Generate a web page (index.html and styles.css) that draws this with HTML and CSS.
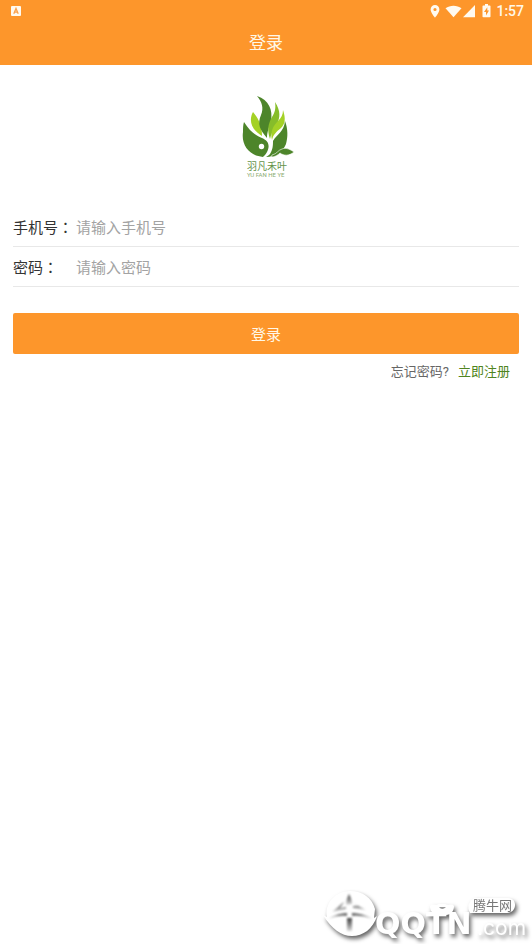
FILE: index.html
```html
<!DOCTYPE html>
<html lang="zh-CN">
<head>
<meta charset="utf-8">
<meta name="viewport" content="width=device-width, initial-scale=1">
<title>登录</title>
<link rel="stylesheet" href="styles.css">
</head>
<body>
<header class="header">
  <div class="status">
    <svg class="app-icon" width="12" height="12" viewBox="0 0 12 12" aria-hidden="true">
      <rect x="1" y="1" width="10" height="10" rx="1" fill="#fffaf0"/>
      <path d="M3.8 8.800 6 3.500 8.200 8.800M4.800 7.200h2.400" fill="none" stroke="#fba04a" stroke-width="1.300"/>
    </svg>
    <div class="status-right">
      <svg width="64" height="16" viewBox="0 0 64 16" fill="#fffaf0" aria-hidden="true">
        <path fill-rule="evenodd" d="M7 2a4.400 4.400 0 0 0-4.400 4.400C2.600 9.600 7 14.500 7 14.500s4.400-4.900 4.400-8.100A4.400 4.400 0 0 0 7 2zm0 2.900a1.600 1.600 0 1 1 0 3.200 1.600 1.600 0 0 1 0-3.200z"/>
        <path d="M17.500 5.300C22 1.800 29 1.800 33.500 5.300L25.500 14.200z"/>
        <path d="M47 2v12.200H35z"/>
        <path fill-rule="evenodd" d="M57 1h3v1.500h1.700q.8 0 .8.800v10.100q0 .8-.8.800h-6.400q-.8 0-.8-.8V3.300q0-.8.800-.8H57zM59.300 4.200 56 9.100h2v3.400l3-4.900h-1.700z"/>
      </svg>
      <span class="clock">1:57</span>
    </div>
  </div>
  <h1 class="title">登录</h1>
</header>
<main class="page">
  <svg class="logo" width="60" height="84" viewBox="-6 0 60 84" role="img" aria-label="羽凡禾叶">
    <path d="M11 17C7 24 8 34 20 41 20 31 17 24 11 17z" fill="#a4d126"/>
    <path d="M15 1C27 5 31 15 29 26 27 33 25 37 25 43 18 35 15 29 19 20 22 13 20 7 15 1z" fill="#4d852a"/>
    <path d="M33 7C39 16 38 23 35 29 31 35 29 39 28 44 25 35 26 29 30 22 33 17 34 13 33 7z" fill="#86bd2a"/>
    <path d="M41 15C44 24 43 29 39 33 34 37 31 40 30 45 28 37 31 31 36 26 39 23 41 20 41 15z" fill="#a4d126"/>
    <path d="M2 27C8 37 15 41 20 43 27 46 28 51 25 57 24 59 22 61 21 62 8 61-1 51 1 37 1 33 1 30 2 27z" fill="#4d852a"/>
    <path d="M43 26C42 37 35 39 31 46 31 50 31 54 28 59 26 61 25 61 24 62 33 62 41 57 44 49 46 42 46 34 43 26z" fill="#4d852a"/>
    <circle cx="19.500" cy="51.500" r="2.700" fill="#fff"/>
    <path d="M30 60C35 59 36 55 40 54 44 52 49 55 52 57 47 61 42 61 38 58 36 60 33 62 29 62z" fill="#4d852a" stroke="#fff" stroke-width=".6"/>
    <text x="5" y="75" class="logo-name">羽凡禾叶</text>
    <text x="5" y="82" class="logo-latin">YU FAN HE YE</text>
  </svg>
  <form class="form">
    <div class="field">
      <label for="phone">手机号<span class="colon" lang="zh-TW">：</span></label>
      <input id="phone" type="tel" placeholder="请输入手机号">
    </div>
    <div class="field">
      <label for="password">密码<span class="colon" lang="zh-TW">：</span></label>
      <input id="password" type="password" placeholder="请输入密码">
    </div>
    <button class="submit" type="submit">登录</button>
    <nav class="links">
      <a class="forgot" href="#">忘记密码?</a>
      <a class="register" href="#">立即注册</a>
    </nav>
  </form>
</main>
<div class="watermark">
  <svg width="220" height="64" viewBox="0 0 220 64" role="img" aria-label="QQTN.com 腾牛网">
    <defs>
      <linearGradient id="shade" x1="0" y1="0" x2="0" y2="1">
        <stop offset="0" stop-color="#444"/>
        <stop offset=".5" stop-color="#888"/>
        <stop offset="1" stop-color="#ddd"/>
      </linearGradient>
    </defs>
    <g class="raised" fill="#fff">
      <path d="M11 35 15 37C12 24 23 11 38 11 51 11 60 18 63 29L62 38 65 36C61 49 51 56 40 56 29 56 20 49 11 35z"/>
      <path d="M118 26C120 23 123 26 127 24H133C137 26 140 23 142 26 142 31 139 35 134 35H126C121 35 118 31 118 26z"/>
      <path d="M162 18H196C206 18 205 33 195 33H158Q153 24 162 18z"/>
      <text x="63" y="54" class="brand">QQTN</text>
      <text x="165" y="55" class="domain">.com</text>
    </g>
    <g fill="url(#shade)" class="soft">
      <path d="M37 14Q34 19 34 25L40 24Q40 19 37 14z"/>
      <path d="M32 22 20 32 34 29V27L28 28z"/>
      <path d="M41 23 54 30 41 28V26H46z"/>
      <path d="M16 39Q26 33 35 33L35 36Q25 35 16 39zM40 33Q50 33 61 39 50 35 40 36z"/>
      <path d="M35 38H40V51H35z"/>
    </g>
    <path d="M127 27Q130 31 134 27z" fill="#999"/>
    <text x="161" y="30" class="tag">腾牛网</text>
  </svg>
</div>
</body>
</html>
```
FILE: styles.css
```css
* {
  box-sizing: border-box;
}

body {
  margin: 0;
  min-height: 100vh;
  background: #fff;
  color: #333;
  font-family: Roboto, "Noto Sans CJK SC", sans-serif;
  font-size: 15px;
}

.header {
  background: #fd962b;
  color: #fff8e8;
}

.status {
  display: flex;
  align-items: center;
  justify-content: space-between;
  height: 22px;
  padding: 0 8px 0 10px;
}

.status-right {
  display: flex;
  align-items: center;
  gap: 4px;
}

.clock {
  font-size: 14px;
  font-weight: 500;
}

.title {
  margin: 0;
  font-size: 17px;
  font-weight: 400;
  line-height: 43px;
  text-align: center;
}

.page {
  padding: 30px 13px 0;
}

.logo {
  display: block;
  margin: 0 auto 28px;
}

.logo-name {
  fill: #659349;
  font-size: 10px;
}

.logo-latin {
  fill: #8aab72;
  font-size: 6px;
}

.field {
  display: flex;
  align-items: center;
  height: 40px;
  padding-top: 2px;
  border-bottom: 1px solid #e8e8e8;
}

.field label {
  width: 63px;
  flex-shrink: 0;
  line-height: 24px;
  white-space: nowrap;
}

.colon {
  font-family: "Noto Sans CJK TC", sans-serif;
}

.field input {
  flex: 1;
  min-width: 0;
  height: 24px;
  padding: 0;
  border: 0;
  outline: 0;
  background: none;
  color: #333;
  font: inherit;
}

.field input::placeholder {
  color: #a3a3a3;
}

.submit {
  display: block;
  width: 100%;
  height: 41px;
  margin-top: 26px;
  padding: 0;
  border: 0;
  border-radius: 2px;
  background: #fd962b;
  color: #fff8e8;
  font: inherit;
}

.links {
  display: flex;
  justify-content: flex-end;
  gap: 9px;
  padding: 8px 9px 0;
  font-size: 13px;
  line-height: 20px;
}

.links a {
  text-decoration: none;
}

.forgot {
  color: #666;
}

.register {
  color: #4f8420;
}

.watermark {
  position: fixed;
  right: 0;
  bottom: 0;
  height: 64px;
  pointer-events: none;
}

.raised {
  filter: drop-shadow(2px 3px 2px rgba(0, 0, 0, 0.6));
}

.soft {
  filter: blur(1px);
}

.brand {
  font-family: "DejaVu Sans", sans-serif;
  font-size: 30px;
  font-weight: 700;
}

.domain {
  font-family: Inter, sans-serif;
  font-size: 21px;
}

.tag {
  fill: #777;
  font-size: 13px;
}
```
